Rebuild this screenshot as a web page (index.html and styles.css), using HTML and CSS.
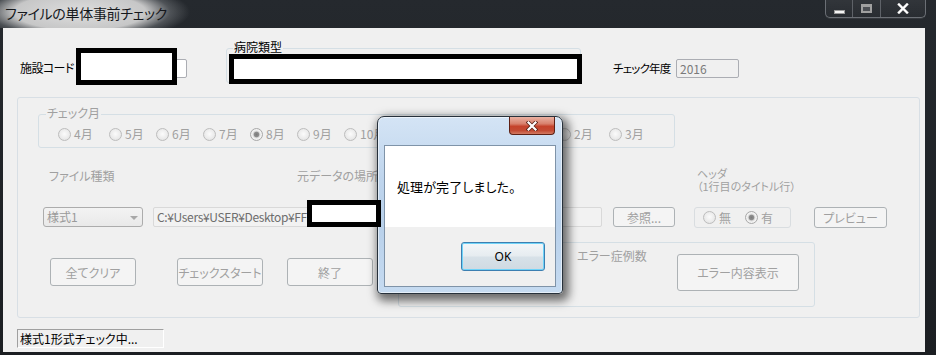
FILE: index.html
```html
<!DOCTYPE html>
<html lang="ja">
<head>
<meta charset="utf-8">
<title>ファイルの単体事前チェック</title>
<link rel="stylesheet" href="styles.css">
</head>
<body>
<div class="window">
  <div class="titlebar">
    <div class="title">ファイルの単体事前チェック</div>
    <div class="controls">
      <div class="ctl ctl-min"><span class="glyph-min"></span></div>
      <div class="ctl ctl-max"><span class="glyph-max"></span></div>
      <div class="ctl ctl-close">
        <svg width="12" height="11" viewBox="0 0 12 11"><path d="M2 1.5 L10 9.5 M10 1.5 L2 9.5" stroke="#3a3d42" stroke-width="4" stroke-linecap="square"/><path d="M2 1.5 L10 9.5 M10 1.5 L2 9.5" stroke="#ffffff" stroke-width="2.4" stroke-linecap="square"/></svg>
      </div>
    </div>
  </div>
  <div class="frame">
    <div class="client">
      <div class="row1">
        <span class="lbl lbl-shisetsu">施設コード</span>
        <div class="textbox tb-shisetsu"></div>
        <div class="group grp-byoin"><span class="grp-label grp-label-dark">病院類型</span></div>
        <span class="lbl lbl-nendo">チェック年度</span>
        <div class="textbox tb-nendo">2016</div>
      </div>

      <div class="panel">
        <div class="group grp-month">
          <span class="grp-label">チェック月</span>
          <div class="radios">
            <span class="ritem w51"><span class="rb"></span>4月</span>
            <span class="ritem w47"><span class="rb"></span>5月</span>
            <span class="ritem w47"><span class="rb"></span>6月</span>
            <span class="ritem w47"><span class="rb"></span>7月</span>
            <span class="ritem w47"><span class="rb rb-on"></span>8月</span>
            <span class="ritem w47"><span class="rb"></span>9月</span>
            <span class="ritem w54"><span class="rb"></span>10月</span>
            <span class="ritem w54"><span class="rb"></span>11月</span>
            <span class="ritem w53"><span class="rb"></span>12月</span>
            <span class="ritem w53"><span class="rb"></span>1月</span>
            <span class="ritem w51"><span class="rb"></span>2月</span>
            <span class="ritem"><span class="rb"></span>3月</span>
          </div>
        </div>

        <div class="labels-row">
          <span class="lbl-grey lbl-filetype">ファイル種類</span>
          <span class="lbl-grey lbl-src">元データの場所</span>
          <div class="lbl-grey lbl-header">
            <span class="hdr-line">ヘッダ</span>
            <span class="hdr-line">（1行目のタイトル行）</span>
          </div>
        </div>

        <div class="controls-row">
          <div class="combo"><span>様式1</span><span class="arrow"></span></div>
          <div class="pathbox">C:¥Users¥USER¥Desktop¥FF</div>
          <div class="btn btn-ref">参照...</div>
          <div class="radiogrp">
            <span class="ritem w42"><span class="rb"></span>無</span>
            <span class="ritem"><span class="rb rb-on"></span>有</span>
          </div>
          <div class="btn btn-preview">プレビュー</div>
        </div>

        <div class="bottom-row">
          <div class="btn btn-big btn-clear">全てクリア</div>
          <div class="btn btn-big btn-start">チェックスタート</div>
          <div class="btn btn-big btn-end">終了</div>
          <div class="group grp-error">
            <span class="lbl-grey lbl-errcount">エラー症例数</span>
            <div class="btn btn-errshow">エラー内容表示</div>
          </div>
        </div>
      </div>

      <div class="status">様式1形式チェック中...</div>
    </div>
  </div>
</div>

<div class="dialog">
  <div class="dlg-close">
    <svg width="12" height="10" viewBox="0 0 12 10"><path d="M2.5 1.5 L9.5 8.5 M9.5 1.5 L2.5 8.5" stroke="#5a2418" stroke-width="3.8" stroke-linecap="square"/><path d="M2.5 1.5 L9.5 8.5 M9.5 1.5 L2.5 8.5" stroke="#ffffff" stroke-width="2.2" stroke-linecap="square"/></svg>
  </div>
  <div class="dlg-client">
    <div class="dlg-msg">処理が完了しました。</div>
    <div class="dlg-foot">
      <div class="dlg-ok">OK</div>
    </div>
  </div>
</div>

<div class="redact redact1"></div>
<div class="redact redact2"></div>
<div class="redact redact3"></div>
</body>
</html>
```

FILE: styles.css
```css
* { box-sizing: border-box; }
html, body { margin: 0; padding: 0; }
body {
  width: 936px;
  height: 355px;
  overflow: hidden;
  position: relative;
  background: #15171a;
  font-family: "Noto Sans CJK JP", "Noto Sans", sans-serif;
  font-size: 12px;
  font-feature-settings: "palt" 1;
  color: #000;
}

/* ---------- main window ---------- */
.window {
  width: 936px;
  height: 355px;
  display: flex;
  flex-direction: column;
  background: linear-gradient(180deg, #25292e 0%, #1b1e22 100%);
}
.titlebar {
  height: 28px;
  display: flex;
  align-items: flex-start;
}
.title {
  height: 28px;
  padding: 4px 26px 0 5px;
  font-size: 14px;
  line-height: 19px;
  letter-spacing: -0.3px;
  white-space: nowrap;
  color: #15181c;
  background: radial-gradient(ellipse 110px 30px at 80px 12px, rgba(228,228,228,0.97) 0%, rgba(212,212,212,0.92) 60%, rgba(120,124,128,0.5) 82%, rgba(30,33,37,0) 100%);
}
.controls {
  margin-left: auto;
  margin-right: 10px;
  display: flex;
  height: 18px;
  border: 1px solid #6b6f75;
  border-top: none;
  border-radius: 0 0 5px 5px;
  box-shadow: 0 1px 0 rgba(255,255,255,0.08);
}
.ctl {
  height: 17px;
  display: flex;
  align-items: center;
  justify-content: center;
  background: linear-gradient(180deg, rgba(255,255,255,0.06), rgba(255,255,255,0.02));
}
.ctl-min { width: 27px; border-right: 1px solid #5e6268; }
.ctl-max { width: 28px; border-right: 1px solid #5e6268; }
.ctl-close { width: 44px; }
.glyph-min {
  width: 11px;
  height: 4px;
  margin-top: 6px;
  background: #f4f4f4;
  border: 1px solid #9a9a9a;
}
.glyph-max {
  width: 11px;
  height: 9px;
  border: 2px solid #a0a0a0;
  border-top-width: 3px;
  background: #4c4f54;
}

.frame {
  flex: 1;
  display: flex;
}
.client {
  margin-left: 3px;
  width: 922px;
  height: 324px;
  background: #f0f0f0;
  display: flex;
  flex-direction: column;
}

/* ---------- row 1 ---------- */
.row1 {
  height: 69px;
  display: flex;
  align-items: flex-start;
}
.lbl { line-height: 14px; margin-top: 33px; white-space: nowrap; flex: none; }
.lbl-shisetsu { margin-left: 17px; width: 60px; letter-spacing: -0.6px; }
.textbox {
  height: 19px;
  margin-top: 31px;
  border: 1px solid #abadb3;
  border-radius: 2px;
  background: #fff;
  flex: none;
}
.tb-shisetsu { margin-left: 3px; width: 104px; }
.group {
  border: 1px solid #d5dfe5;
  border-radius: 3px;
  position: relative;
  flex: none;
}
.grp-label {
  position: absolute;
  top: -9px;
  left: 6px;
  padding: 0 1px;
  line-height: 14px;
  white-space: nowrap;
  background: #f0f0f0;
  color: #a0a0a0;
}
.grp-label-dark { color: #000; }
.grp-byoin {
  margin-left: 39px;
  margin-top: 20px;
  width: 355px;
  height: 35px;
}
.lbl-nendo { margin-left: 32px; width: 63px; font-size: 11.5px; letter-spacing: -0.8px; }
.tb-nendo {
  width: 63px;
  padding-left: 3px;
  line-height: 17px;
  color: #7a7a7a;
  background: #f0f0f0;
}

/* ---------- main panel ---------- */
.panel {
  margin-left: 14px;
  width: 903px;
  height: 221px;
  border: 1px solid #d8dfe5;
  border-radius: 3px;
  display: flex;
  flex-direction: column;
  color: #a0a0a0;
}
.grp-month {
  margin-left: 20px;
  margin-top: 16px;
  width: 637px;
  height: 34px;
}
.grp-month .grp-label { left: 7px; }
.radios {
  display: flex;
  padding-top: 12px;
  padding-left: 19px;
}
.ritem {
  display: inline-flex;
  align-items: center;
  height: 14px;
  line-height: 14px;
  white-space: nowrap;
  flex: none;
}
.w42 { width: 42px; }
.w47 { width: 47px; }
.w51 { width: 51px; }
.w53 { width: 53px; }
.w54 { width: 54px; }
.rb {
  width: 13px;
  height: 13px;
  margin-right: 3px;
  border: 1px solid #bdbdbd;
  border-radius: 50%;
  background: radial-gradient(circle at 50% 45%, #fbfbfb 0%, #ececec 55%, #dcdcdc 100%);
  flex: none;
}
.rb-on {
  border-color: #a9a9a9;
  background: radial-gradient(circle at 50% 50%, #7b7b7b 0, #8f8f8f 2.4px, #d6d6d6 3.2px, #f4f4f4 4.5px, #e2e2e2 100%);
}

.labels-row {
  margin-top: 19px;
  height: 27px;
  display: flex;
  align-items: flex-start;
  flex: none;
}
.lbl-grey { color: #a0a0a0; white-space: nowrap; }
.lbl-filetype { margin-left: 31px; margin-top: 2px; width: 248px; line-height: 14px; }
.lbl-src { width: 400px; margin-top: 2px; line-height: 14px; }
.lbl-header {
  display: flex;
  flex-direction: column;
  font-size: 11px;
}
.hdr-line { display: block; height: 13px; line-height: 13px; }

.controls-row {
  margin-top: 13px;
  height: 21px;
  display: flex;
  align-items: flex-start;
  flex: none;
}
.combo {
  margin-left: 25px;
  width: 100px;
  height: 20px;
  border: 1px solid #acacac;
  border-radius: 3px;
  background: linear-gradient(180deg, #f3f3f3, #e9e9e9);
  display: flex;
  align-items: center;
  justify-content: space-between;
  padding: 0 4px 0 3px;
  color: #9a9a9a;
  line-height: 16px;
}
.arrow {
  width: 0;
  height: 0;
  border-left: 4px solid transparent;
  border-right: 4px solid transparent;
  border-top: 4px solid #a8a8a8;
  margin-top: 2px;
}
.pathbox {
  margin-left: 10px;
  width: 449px;
  height: 20px;
  border: 1px solid #d9d9d9;
  border-radius: 2px;
  background: #f2f2f2;
  padding-left: 3px;
  line-height: 18px;
  color: #6d6d6d;
  letter-spacing: -0.35px;
  white-space: nowrap;
  overflow: hidden;
}
.btn {
  border: 1px solid #adb2b5;
  border-radius: 3px;
  background: #f4f4f4;
  color: #a0a0a0;
  display: flex;
  align-items: center;
  justify-content: center;
  white-space: nowrap;
  flex: none;
}
.btn-ref { margin-left: 11px; width: 62px; height: 20px; }
.radiogrp {
  margin-left: 19px;
  width: 97px;
  height: 21px;
  border: 1px solid #d9dde0;
  border-radius: 3px;
  display: flex;
  align-items: center;
  padding-left: 8px;
}
.btn-preview { margin-left: 23px; width: 73px; height: 21px; }

.bottom-row {
  margin-top: 14px;
  display: flex;
  align-items: flex-start;
  flex: none;
}
.btn-big { width: 86px; height: 28px; margin-top: 16px; }
.btn-clear { margin-left: 32px; }
.btn-start { margin-left: 41px; }
.btn-end { margin-left: 24px; }
.grp-error {
  margin-left: 25px;
  width: 417px;
  height: 65px;
  display: flex;
  align-items: flex-start;
}
.lbl-errcount { margin-left: 178px; margin-top: 6px; width: 100px; line-height: 14px; }
.btn-errshow { margin-top: 11px; width: 122px; height: 37px; }

.status {
  margin-left: 14px;
  margin-top: 11px;
  width: 147px;
  height: 19px;
  border: 1px solid #a0a0a0;
  border-color: #a0a0a0 #ffffff #ffffff #a0a0a0;
  padding-left: 2px;
  line-height: 17px;
  white-space: nowrap;
}

/* ---------- dialog ---------- */
.dialog {
  position: absolute;
  left: 377px;
  top: 116px;
  width: 186px;
  height: 178px;
  padding: 28px 6px 6px 6px;
  border: 1px solid #27313b;
  border-radius: 7px 7px 4px 4px;
  background: linear-gradient(180deg, #d4e4f5 0%, #bfd5ed 35%, #b8d0ea 60%, #c6dbf1 100%);
  box-shadow: 3px 4px 10px 3px rgba(0,0,0,0.55), inset 0 0 0 1px rgba(255,255,255,0.55);
}
.dlg-close {
  position: absolute;
  right: 7px;
  top: 0;
  width: 46px;
  height: 18px;
  border: 1px solid #5e2014;
  border-top: none;
  border-radius: 0 0 4px 4px;
  background: linear-gradient(180deg, #eab1a2 0%, #d8806c 40%, #c5422b 55%, #c34b34 80%, #d27a62 100%);
  display: flex;
  align-items: center;
  justify-content: center;
}
.dlg-client {
  height: 142px;
  border: 1px solid #7f93a8;
  display: flex;
  flex-direction: column;
}
.dlg-msg {
  height: 81px;
  background: #ffffff;
  padding: 33px 0 0 12px;
  font-size: 13px;
  line-height: 16px;
  letter-spacing: 0.1px;
  white-space: nowrap;
}
.dlg-foot {
  flex: 1;
  background: #f0f0f0;
  display: flex;
  justify-content: flex-end;
  align-items: flex-start;
}
.dlg-ok {
  margin-top: 15px;
  margin-right: 10px;
  width: 84px;
  height: 29px;
  border: 1px solid #3c7fb1;
  border-radius: 3px;
  box-shadow: inset 0 0 0 1px #6fd3f8;
  background: linear-gradient(180deg, #f3f6f9 0%, #e6ecf0 48%, #d7e1e8 52%, #cfdae2 100%);
  display: flex;
  align-items: center;
  justify-content: center;
  font-family: "Noto Sans", sans-serif;
  font-size: 12px;
  color: #000;
}

/* ---------- redaction marks drawn over the screenshot ---------- */
.redact {
  position: absolute;
  border: 5px solid #000;
  background: #fff;
}
.redact1 { left: 76px; top: 48px; width: 101px; height: 37px; }
.redact2 { left: 229px; top: 54px; width: 353px; height: 30px; }
.redact3 { left: 307px; top: 200px; width: 74px; height: 27px; }
```
